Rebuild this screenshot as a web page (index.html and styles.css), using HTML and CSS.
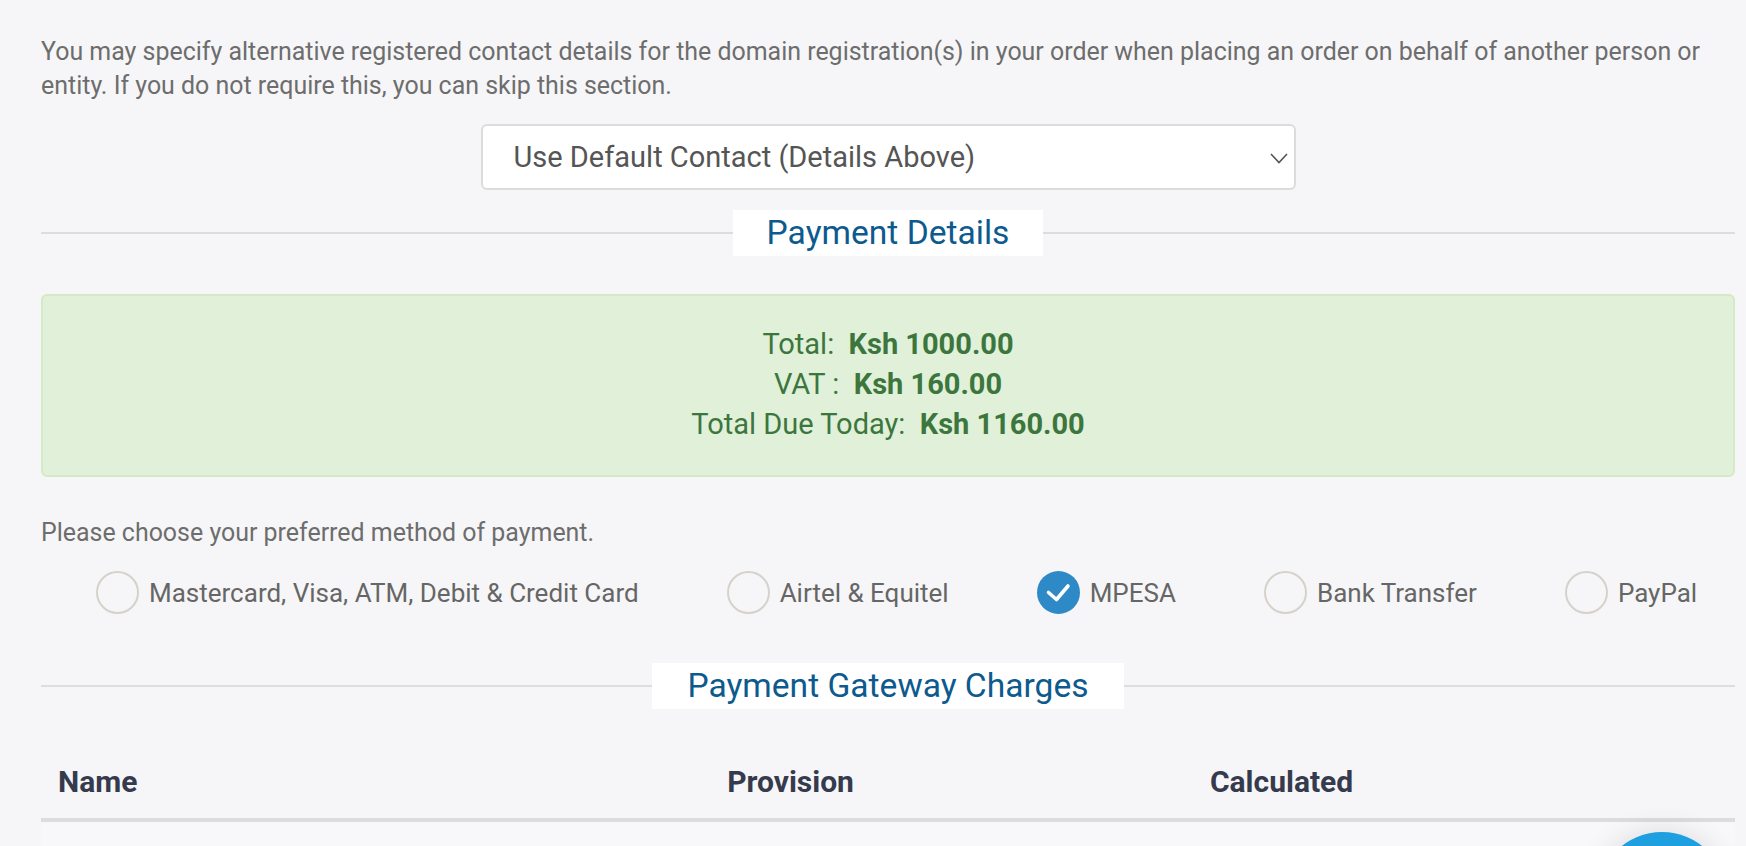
FILE: index.html
```html
<!DOCTYPE html>
<html lang="en">
<head>
<meta charset="utf-8">
<title>Checkout</title>
<link rel="stylesheet" href="styles.css">
</head>
<body>
<div class="page">
  <p class="intro">You may specify alternative registered contact details for the domain registration(s) in your order when placing an order on behalf of another person or entity. If you do not require this, you can skip this section.</p>

  <div class="select-row">
    <div class="select">
      <span>Use Default Contact (Details Above)</span>
      <svg class="chev" width="18" height="11" viewBox="0 0 18 11"><path d="M1 1 L9 9.5 L17 1" fill="none" stroke="#555" stroke-width="1.6"/></svg>
    </div>
  </div>

  <div class="sub-heading"><span>Payment Details</span></div>

  <div class="totals">
    <div>Total:&nbsp; <strong>Ksh 1000.00</strong></div>
    <div>VAT :&nbsp; <strong>Ksh 160.00</strong></div>
    <div>Total Due Today:&nbsp; <strong>Ksh 1160.00</strong></div>
  </div>

  <p class="choose">Please choose your preferred method of payment.</p>

  <div class="methods">
    <label class="method"><span class="radio"></span><span>Mastercard, Visa, ATM, Debit &amp; Credit Card</span></label>
    <label class="method"><span class="radio"></span><span>Airtel &amp; Equitel</span></label>
    <label class="method"><span class="radio checked"><svg width="43" height="43" viewBox="0 0 43 43"><path d="M11.5 21.5 L19.5 28.5 L31 15" fill="none" stroke="#fff" stroke-width="3.6" stroke-linecap="round" stroke-linejoin="round"/></svg></span><span>MPESA</span></label>
    <label class="method"><span class="radio"></span><span>Bank Transfer</span></label>
    <label class="method"><span class="radio"></span><span>PayPal</span></label>
  </div>

  <div class="sub-heading gateway"><span>Payment Gateway Charges</span></div>

  <table class="charges">
    <thead>
      <tr><th class="c-name">Name</th><th class="c-prov">Provision</th><th>Calculated</th></tr>
    </thead>
    <tbody>
      <tr><td></td><td></td><td></td></tr>
    </tbody>
  </table>
</div>
<div class="chat-btn"></div>
</body>
</html>
```

FILE: styles.css
```css
html, body {
  margin: 0;
  padding: 0;
  background: #f6f6f8;
  height: 846px;
  overflow: hidden;
}

body {
  font-family: Roboto, "Liberation Sans", sans-serif;
  color: #6c6c6c;
}

.page {
  padding: 35px 11px 0 41px;
}

.intro {
  margin: 0;
  font-size: 24.95px;
  line-height: 34px;
  color: #6d6d6d;
}

.select-row {
  display: flex;
  justify-content: center;
  margin-top: 21px;
}

.select {
  box-sizing: border-box;
  width: 815px;
  height: 66px;
  background: #fff;
  border: 2px solid #dcdcdc;
  border-radius: 6px;
  display: flex;
  align-items: center;
  justify-content: space-between;
  padding: 0 6px 0 31px;
  font-size: 29px;
  color: #555;
}

.chev {
  margin-top: 2px;
}

.sub-heading {
  display: flex;
  align-items: center;
  margin-top: 20px;
}

.sub-heading::before,
.sub-heading::after {
  content: "";
  flex: 1;
  height: 2px;
  background: #dddde0;
}

.sub-heading span {
  background: #fff;
  height: 46px;
  line-height: 46px;
  padding: 0 34px;
  font-size: 33.6px;
  color: #0d5a8e;
}

.totals {
  margin-top: 38px;
  box-sizing: border-box;
  height: 183px;
  padding-top: 28px;
  background: #e0f0d9;
  border: 2px solid #d6e9c6;
  border-radius: 6px;
  text-align: center;
  font-size: 29px;
  line-height: 40px;
  color: #3c763d;
}

.totals div {
  height: 40px;
}

.totals strong {
  font-weight: 700;
}

.choose {
  margin: 39px 0 0;
  font-size: 24.95px;
  line-height: 34px;
  color: #6d6d6d;
}

.methods {
  display: flex;
  align-items: center;
  gap: 88px;
  padding-left: 55px;
  margin-top: 21px;
  height: 43px;
}

.method {
  display: flex;
  align-items: center;
  gap: 10px;
  font-size: 26px;
  color: #666;
  white-space: nowrap;
}

.radio {
  box-sizing: border-box;
  width: 43px;
  height: 43px;
  border-radius: 50%;
  border: 2px solid #d6d2cb;
  flex: none;
  display: block;
}

.radio.checked {
  border: none;
  background: #2d8ac6;
}

.radio svg {
  display: block;
}

.sub-heading.gateway {
  margin-top: 49px;
}

.gateway span {
  padding: 0 35px;
}

.charges {
  width: 100%;
  margin-top: 37px;
  border-collapse: collapse;
}

.charges th {
  text-align: left;
  font-size: 30px;
  font-weight: 700;
  color: #353b4d;
  line-height: 34px;
  padding: 19px 17px;
  border-bottom: 4px solid #dcdcdf;
}

.c-name {
  width: 39.5%;
}

.c-prov {
  width: 28.5%;
}

.charges td {
  height: 30px;
  padding: 0;
  background: #f8f8fa;
}

.chat-btn {
  position: fixed;
  right: 19px;
  bottom: -116px;
  width: 130px;
  height: 130px;
  border-radius: 50%;
  background: #1e9fe0;
  box-shadow: 0 0 30px rgba(0, 0, 0, 0.12);
}
```
